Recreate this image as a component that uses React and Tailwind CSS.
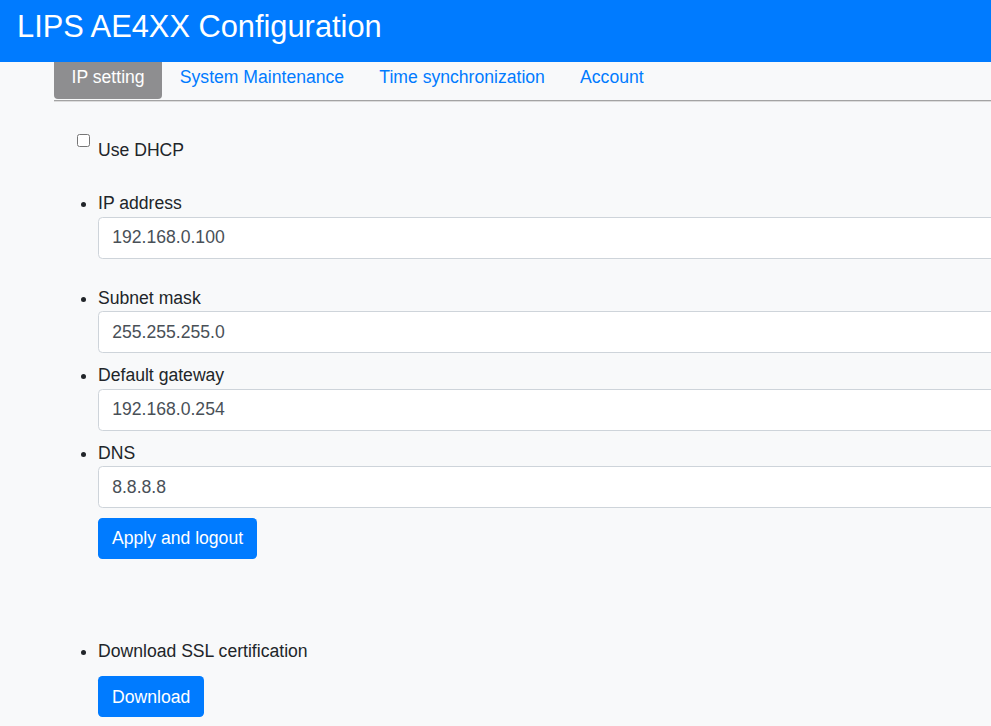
import React from 'react';

const fields = [
    { label: 'IP address', value: '192.168.0.100', gap: 'mt-[9px]' },
    { label: 'Subnet mask', value: '255.255.255.0', gap: 'mt-[26px]' },
    { label: 'Default gateway', value: '192.168.0.254', gap: 'mt-[9px]' },
    { label: 'DNS', value: '8.8.8.8', gap: 'mt-[9px]' },
];

const tabs = ['System Maintenance', 'Time synchronization', 'Account'];

const App = () => {
    return (
        <div className="w-full min-h-screen overflow-hidden bg-[#f8f9fa] text-[#212529] font-['Liberation_Sans',Arial,sans-serif] text-[17.6px] leading-[26.4px]">
            {/* header */}
            <header className="h-[62px] bg-[#007bff] text-white pl-[17px]">
                <h1 className="text-[30.8px] leading-[54px] font-normal">LIPS AE4XX Configuration</h1>
            </header>

            <div className="w-[1100px] ml-[54px]">
                {/* tabs */}
                <nav className="flex pb-[1px] border-b border-[#a3a3a3] shadow-[0_1px_0_#dcdcdc]">
                    <span className="h-[37px] px-[17.6px] leading-[30px] bg-[#8e8e90] text-white rounded-b-[4px]">IP setting</span>
                    {tabs.map(tab => (
                        <a key={tab} href="#" className="h-[37px] px-[17.6px] leading-[30px] text-[#007bff]">{tab}</a>
                    ))}
                </nav>

                {/* DHCP */}
                <div className="flex mt-[32px]">
                    <input type="checkbox" className="w-[13px] h-[13px] mt-[1px] ml-[23px] mr-[8px]" />
                    <span className="mt-[4px]">Use DHCP</span>
                </div>

                <ul className="list-disc pl-[44px] mt-[27px]">
                    {fields.map((f, i) => (
                        <li key={f.label} className={i === 0 ? '' : f.gap}>
                            <div>{f.label}</div>
                            <input
                                type="text"
                                defaultValue={f.value}
                                className="block w-[960px] h-[42px] px-[13.2px] bg-white border border-[#ced4da] rounded-[4.4px] text-[#495057] outline-none"
                            />
                        </li>
                    ))}
                    <li className="list-none mt-[10px]">
                        <button className="h-[41px] px-[14px] bg-[#007bff] text-white rounded-[4.4px]">Apply and logout</button>
                    </li>
                    <li className="mt-[79px]">
                        <div>Download SSL certification</div>
                        <button className="mt-[12px] h-[41px] px-[14px] bg-[#007bff] text-white rounded-[4.4px]">Download</button>
                    </li>
                </ul>
            </div>
        </div>
    );
};

export default App;
